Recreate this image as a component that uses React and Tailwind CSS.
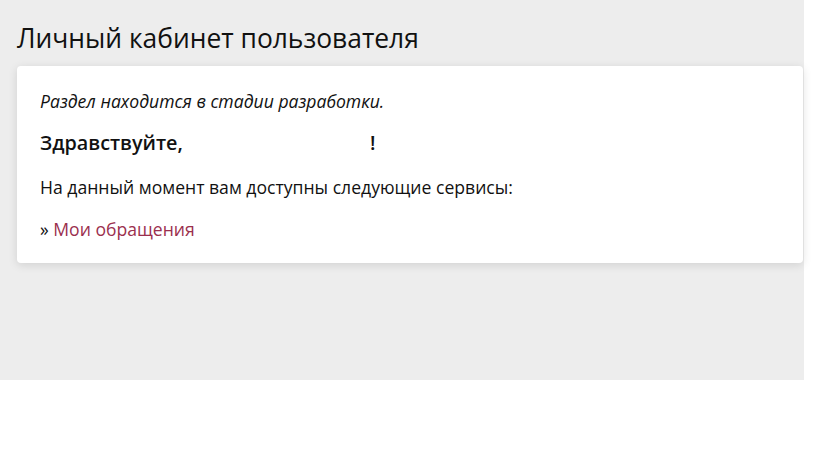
import React from 'react';

const App = () => {
  return (
    <div className="bg-white min-h-screen" style={{ fontFamily: '"Open Sans", sans-serif' }}>
      <div className="w-[804px] h-[380px] bg-[#ededed] pl-[17px] pr-[1px] pt-[20px]">
        <h1 className="text-[26.4px] leading-[36px] text-[#111] font-normal">Личный кабинет пользователя</h1>

        {/* Card */}
        <div className="mt-[10px] bg-white rounded-[4px] shadow-[0_2px_10px_rgba(0,0,0,0.12)] px-[23px] pt-[23px] pb-[22px] text-[17.6px] leading-[24px] text-[#111]">
          <p className="italic mb-[18px]">Раздел находится в стадии разработки.</p>
          <p className="font-semibold text-[19.8px] mb-[20px]">
            Здравствуйте,<span className="inline-block w-[187px]"></span>!
          </p>
          <p className="mb-[18px]">На данный момент вам доступны следующие сервисы:</p>
          <p>
            » <a href="#" className="text-[#9b2f4e]">Мои обращения</a>
          </p>
        </div>
      </div>
    </div>
  );
};

export default App;
